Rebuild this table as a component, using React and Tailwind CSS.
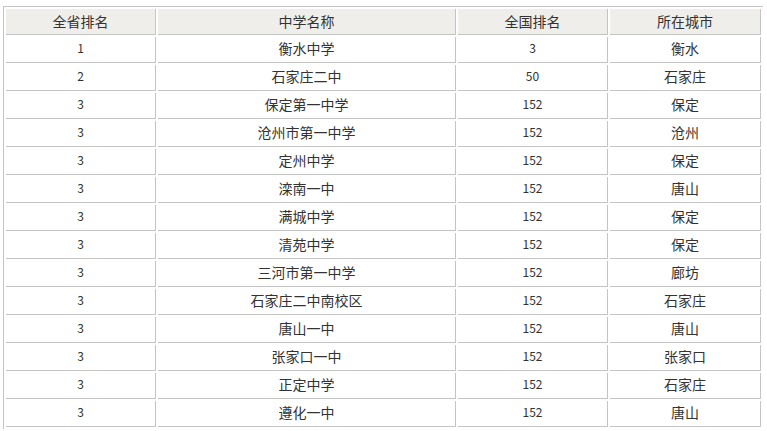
const rows = [
  ["1", "衡水中学", "3", "衡水"],
  ["2", "石家庄二中", "50", "石家庄"],
  ["3", "保定第一中学", "152", "保定"],
  ["3", "沧州市第一中学", "152", "沧州"],
  ["3", "定州中学", "152", "保定"],
  ["3", "滦南一中", "152", "唐山"],
  ["3", "满城中学", "152", "保定"],
  ["3", "清苑中学", "152", "保定"],
  ["3", "三河市第一中学", "152", "廊坊"],
  ["3", "石家庄二中南校区", "152", "石家庄"],
  ["3", "唐山一中", "152", "唐山"],
  ["3", "张家口一中", "152", "张家口"],
  ["3", "正定中学", "152", "石家庄"],
  ["3", "遵化一中", "152", "唐山"],
];

const headers = ["全省排名", "中学名称", "全国排名", "所在城市"];
const widths = ["w-[150px]", "w-[298px]", "w-[150px]", "w-[151px]"];

export default function App() {
  return (
    <div className="min-h-screen bg-white pl-[3px] pt-[6px] text-[#333]" style={{ fontFamily: '"SimSun", "Noto Sans CJK SC", sans-serif' }}>
      <table className="w-[760px] table-fixed border-separate border-spacing-[2px] border-t border-l border-[#c4c4c4]">
        <thead>
          <tr>
            {headers.map((h, i) => (
              <th key={i} className={`${widths[i]} h-[26px] p-0 pb-[2px] bg-[#efeeea] border-r border-b border-[#c4c4c4] text-center font-normal text-[14px] leading-none`}>
                {h}
              </th>
            ))}
          </tr>
        </thead>
        <tbody>
          {rows.map((r, i) => (
            <tr key={i}>
              <td className="h-[26px] p-0 pb-[3px] border-r border-b border-[#c4c4c4] text-center text-[12px] leading-none">{r[0]}</td>
              <td className="h-[26px] p-0 pb-[3px] border-r border-b border-[#c4c4c4] text-center text-[14px] leading-none">{r[1]}</td>
              <td className="h-[26px] p-0 pb-[3px] border-r border-b border-[#c4c4c4] text-center text-[12px] leading-none">{r[2]}</td>
              <td className="h-[26px] p-0 pb-[3px] border-r border-b border-[#c4c4c4] text-center text-[14px] leading-none">{r[3]}</td>
            </tr>
          ))}
        </tbody>
      </table>
    </div>
  );
}
